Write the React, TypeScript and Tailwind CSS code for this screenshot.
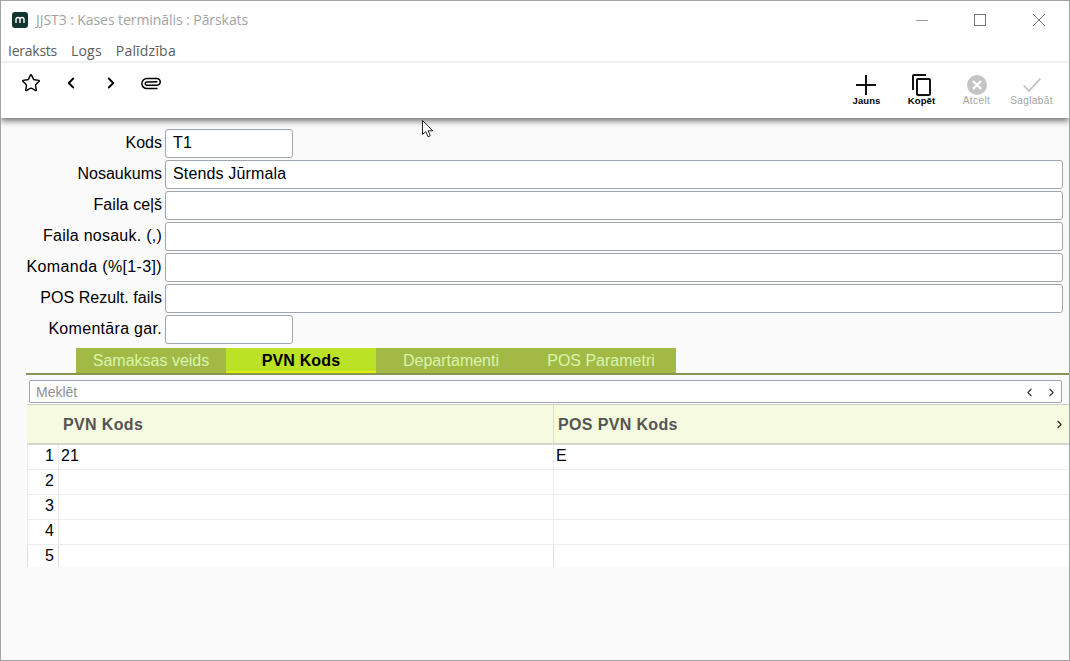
import React from "react";
import { Star, ChevronLeft, ChevronRight, Paperclip } from "lucide-react";

const rows: { label: string; value: string; short?: boolean; track?: string }[] = [
  { label: "Kods", value: "T1", short: true },
  { label: "Nosaukums", value: "Stends Jūrmala" },
  { label: "Faila ceļš", value: "", track: "tracking-[0.1px]" },
  { label: "Faila nosauk. (,)", value: "", track: "tracking-[0.25px]" },
  { label: "Komanda (%[1-3])", value: "", track: "tracking-[0.35px]" },
  { label: "POS Rezult. fails", value: "", track: "tracking-[0.05px]" },
  { label: "Komentāra gar.", value: "", short: true, track: "tracking-[0.3px]" },
];

const tabs = ["Samaksas veids", "PVN Kods", "Departamenti", "POS Parametri"];
const tableRows = [
  ["1", "21", "E"],
  ["2", "", ""],
  ["3", "", ""],
  ["4", "", ""],
  ["5", "", ""],
];

function Tool({ label, disabled, children }: { label: string; disabled?: boolean; children: React.ReactNode }) {
  return (
    <div className="flex w-[55px] flex-col items-center">
      <div className="flex h-[22px] items-center justify-center">{children}</div>
      <span className={`leading-[10px] whitespace-nowrap ${disabled ? "text-[10px] tracking-[0.4px] text-[#a3a3a3]" : "text-[9.5px] font-bold tracking-[0.1px] text-black"}`}>
        {label}
      </span>
    </div>
  );
}

export default function App() {
  return (
    <div className="relative flex h-[661px] w-[1070px] flex-col overflow-hidden border border-[#a3a3a3] bg-[#fafafa] font-['Liberation_Sans',sans-serif] text-black">
      <div className="z-10 shrink-0 bg-white shadow-[0_3px_6px_rgba(0,0,0,0.55)]">
        <div className="flex h-[37px] items-center pl-[11px]">
          <div className="flex h-[16px] w-[16px] items-center justify-center rounded-[3px] bg-[#12352f]">
            <svg width="12" height="10" viewBox="0 0 12 10" fill="none" stroke="white" strokeWidth="1.4">
              <path d="M2 8V4.5C2 3 3 2.5 4 2.5C5.2 2.5 6 3.2 6 4.5V8M6 4.5C6 3.2 6.8 2.5 8 2.5C9 2.5 10 3 10 4.5V8" />
            </svg>
          </div>
          <span className="ml-[8px] font-['Open_Sans',sans-serif] text-[14px] tracking-[-0.07px] text-[#a3a3a3]">JJST3 : Kases terminālis : Pārskats</span>
          <div className="ml-auto flex items-center">
            <svg width="12" height="12" viewBox="0 0 12 12" className="mr-[46px]" fill="none" stroke="#9a9a9a">
              <path d="M0 6.5H12" />
            </svg>
            <svg width="12" height="12" viewBox="0 0 12 12" className="mr-[47px]" fill="none" stroke="#777">
              <rect x="0.5" y="0.5" width="11" height="11" />
            </svg>
            <svg width="12" height="12" viewBox="0 0 12 12" className="mr-[24px]" fill="none" stroke="#777">
              <path d="M0 0L12 12M12 0L0 12" />
            </svg>
          </div>
        </div>
        <div className="flex h-[25px] items-center border-b-[2px] border-[#f0f0f0] pt-[2px] pl-[7px] font-['Open_Sans',sans-serif] text-[14px] text-[#5d5d5d]">
          <span className="tracking-[-0.25px]">Ieraksts</span>
          <span className="ml-[14px] tracking-[0.2px]">Logs</span>
          <span className="ml-[14px] tracking-[0.2px]">Palīdzība</span>
        </div>
        <div className="flex h-[55px] items-start">
          <div className="flex items-center pt-[10px] pl-[20px]">
            <Star size={20} strokeWidth={1.7} />
            <ChevronLeft size={18} strokeWidth={2.4} className="ml-[21px]" />
            <ChevronRight size={18} strokeWidth={2.4} className="ml-[22px]" />
            <Paperclip size={20} strokeWidth={1.8} className="ml-[21px] rotate-[45deg]" />
          </div>
          <div className="ml-auto flex pt-[11px] pr-[10px]">
            <Tool label="Jauns">
              <svg width="20" height="20" viewBox="0 0 20 20" fill="none" stroke="#111" strokeWidth="2" className="-translate-x-px">
                <path d="M10 0V20M0 10H20" />
              </svg>
            </Tool>
            <Tool label="Kopēt">
              <svg width="24" height="24" viewBox="0 0 24 24" fill="#111">
                <path d="M16 1H4c-1.1 0-2 .9-2 2v14h2V3h12V1zm3 4H8c-1.1 0-2 .9-2 2v14c0 1.1.9 2 2 2h11c1.1 0 2-.9 2-2V7c0-1.1-.9-2-2-2zm0 16H8V7h11v14z" />
              </svg>
            </Tool>
            <Tool label="Atcelt" disabled>
              <svg width="20" height="20" viewBox="0 0 20 20">
                <circle cx="10" cy="10" r="10" fill="#c4c4c4" />
                <path d="M6 6L14 14M14 6L6 14" stroke="white" strokeWidth="2.4" />
              </svg>
            </Tool>
            <Tool label="Saglabāt" disabled>
              <svg width="18" height="14" viewBox="0 0 18 14" fill="none" stroke="#c4c4c4" strokeWidth="1.8">
                <path d="M0.7 7.5L6 13L17.3 0.7" />
              </svg>
            </Tool>
          </div>
        </div>
      </div>

      <div className="flex flex-col gap-[2px] pt-[11px] pr-[6px]">
        {rows.map((r) => (
          <div key={r.label} className="flex h-[29px] items-start">
            <div className={`w-[164px] pr-[3px] text-right text-[16px] leading-[27px] whitespace-nowrap ${r.track ?? ""}`}>{r.label}</div>
            <div className={`h-[29px] rounded-[3px] border border-[#a0a6ad] bg-white pl-[7px] text-[16px] leading-[25px] tracking-[0.15px] ${r.short ? "w-[128px]" : "flex-1"}`}>
              {r.value}
            </div>
          </div>
        ))}
      </div>

      <div className="mt-[4px] ml-[25px] flex flex-col">
        <div className="flex border-b-[2px] border-[#87964f] pl-[50px]">
          {tabs.map((t) => {
            const active = t === "PVN Kods";
            return (
              <div
                key={t}
                className={`h-[25px] w-[150px] text-center text-[16px] leading-[25px] ${
                  active ? "border-b-[2px] border-[#dcf000] bg-[#bce226] font-bold tracking-[0.15px] text-black" : "bg-[#a2ba45] text-[#d8f5ae]"
                }`}
              >
                {t}
              </div>
            );
          })}
        </div>
        <div className="mt-[5px] mr-[7px] ml-[3px] flex h-[23px] items-center rounded-[2px] border border-[#a0a6ad] bg-white pt-[1px] pl-[6px] text-[14px] text-[#8a8f96]">
          <span>Meklēt</span>
          <div className="ml-auto flex items-center gap-[9px] pr-[3px] text-[#333]">
            <ChevronLeft size={13} strokeWidth={2} />
            <ChevronRight size={13} strokeWidth={2} />
          </div>
        </div>
        <div className="mt-[1px] ml-[1px] border-t border-[#cfd0cd]">
          <div className="flex h-[40px] items-center border-b-[2px] border-[#d6d8d0] bg-[#f6fae0] text-[16px] font-bold tracking-[0.35px] text-[#555]">
            <div className="h-full w-[32px]" />
            <div className="flex h-full w-[495px] items-center border-r border-[#dfe89a] pt-[1px] pl-[4px]">PVN Kods</div>
            <div className="flex h-full flex-1 items-center pt-[1px] pl-[4px]">
              POS PVN Kods
              <ChevronRight size={13} strokeWidth={2} className="mr-[3px] ml-auto text-[#222]" />
            </div>
          </div>
          {tableRows.map((r, i) => (
            <div key={r[0]} className={`flex bg-white text-[16px] leading-[22px] ${i < 4 ? "h-[25px] [&>div]:border-b [&>div]:border-[#ececec]" : "h-[22px]"}`}>
              <div className="w-[32px] border-r border-l border-[#dcdcdc] bg-white pr-[4px] text-right">{r[0]}</div>
              <div className="w-[495px] border-r border-[#dcdcdc] pl-[2px]">{r[1]}</div>
              <div className="flex-1 pl-[2px]">{r[2]}</div>
            </div>
          ))}
        </div>
      </div>

      <svg width="12" height="18" viewBox="0 0 12 18" className="absolute top-[119px] left-[421px] z-20" fill="white" stroke="#222" strokeWidth="1">
        <path d="M0.5 0.5V14.5L3.8 11.5L6 16.8L8.3 15.8L6.2 10.8H10.8Z" />
      </svg>
    </div>
  );
}
